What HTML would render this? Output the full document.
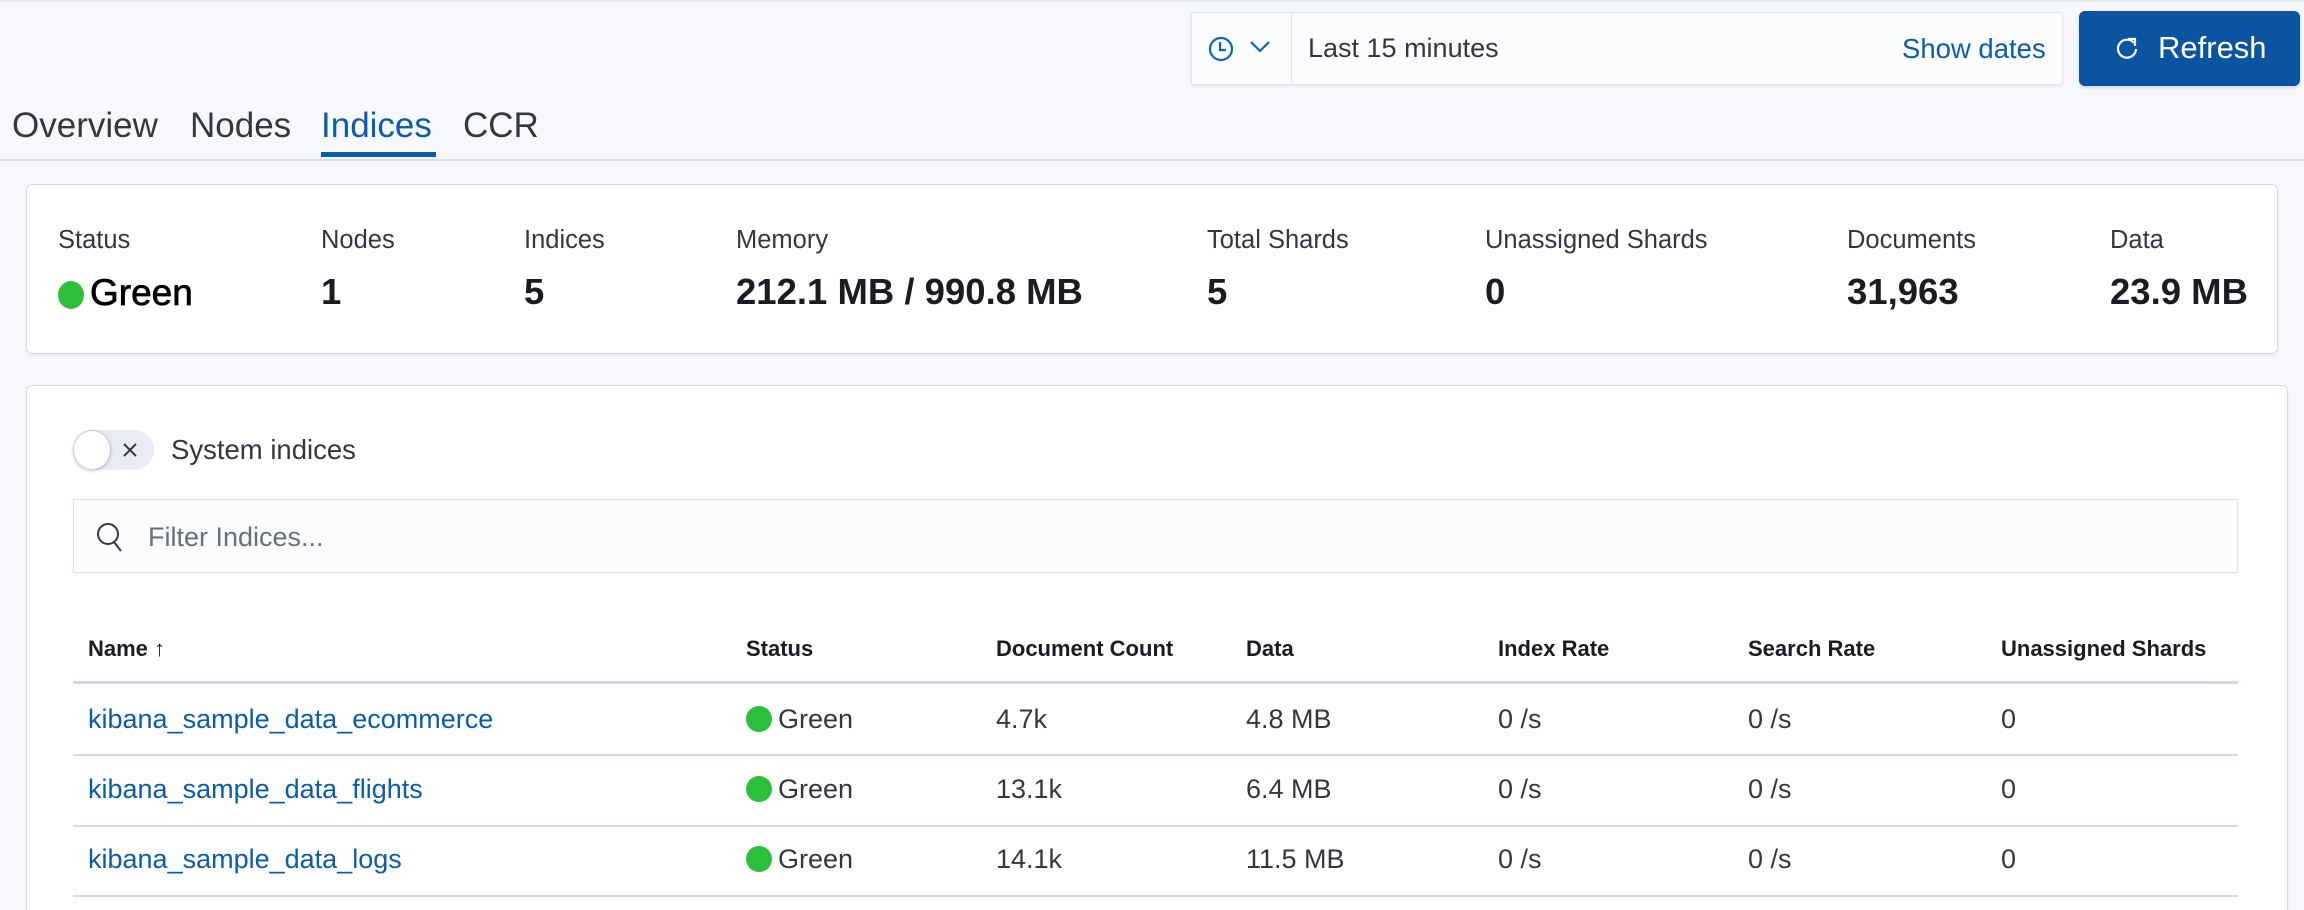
<!DOCTYPE html>
<html><head><meta charset="utf-8"><style>
*{margin:0;padding:0;box-sizing:border-box}
html{width:2304px;height:910px;overflow:hidden}
body{width:2304px;height:910px;background:#f7f8fc;font-family:"Liberation Sans",sans-serif;color:#343741;position:relative;overflow:hidden}
.a{position:absolute;white-space:nowrap}
.panel{position:absolute;background:#fff;border:1px solid #d3dae6;border-radius:6px;box-shadow:0 2px 3px rgba(0,0,0,.06)}
.lbl{font-size:25.5px;color:#343741;top:226px}
.val{font-size:36.5px;font-weight:bold;color:#1a1c21;top:271px}
.th{font-size:22px;font-weight:bold;color:#1a1c21;top:636px}
.td{font-size:27px;color:#343741}
.lnk{color:#0b5cad}
.dot{display:inline-block;width:26px;height:26px;border-radius:50%;background:#2cbf3a;vertical-align:-4px;margin-right:6px}
.hl{position:absolute;left:73px;width:2165px;height:2px;background:#d3dae6}
</style></head><body>
<div class="a" style="left:0;top:0;width:2304px;height:2px;background:#e4e8ef"></div>
<div class="a" style="left:1191px;top:12px;width:872px;height:73px;background:#fbfcfd;border:1px solid #dfe3ea;border-radius:3px;box-shadow:0 1px 2px rgba(0,0,0,.08)"></div>
<div class="a" style="left:1291px;top:12px;width:1px;height:73px;background:#e1e5ec"></div>
<svg class="a" style="left:1207px;top:35px" width="28" height="28" viewBox="0 0 28 28"><circle cx="14" cy="14" r="11" fill="none" stroke="#0b64c0" stroke-width="2.2"/><path d="M13 7v8h6" fill="none" stroke="#0b64c0" stroke-width="2.2"/></svg>
<svg class="a" style="left:1249px;top:40px" width="22" height="14" viewBox="0 0 22 14"><path d="M2 2l9 9 9-9" fill="none" stroke="#0b64c0" stroke-width="2.2"/></svg>
<div class="a" style="left:1308px;top:33px;font-size:27px;color:#343741">Last 15 minutes</div>
<div class="a" style="left:1902px;top:33px;font-size:27.5px;color:#0b5cad">Show dates</div>
<div class="a" style="left:2079px;top:11px;width:221px;height:75px;background:#0b54a2;border-radius:6px;box-shadow:0 2px 3px rgba(0,0,0,.15)"></div>
<svg class="a" style="left:2114px;top:35px" width="26" height="26" viewBox="0 0 26 26"><path d="M20 8A9 9 0 1 0 22 14" fill="none" stroke="#fff" stroke-width="2.2"/><path d="M14 4h7v7" fill="none" stroke="#fff" stroke-width="2.2"/></svg>
<div class="a" style="left:2158px;top:30px;font-size:31px;color:#fff">Refresh</div>
<div class="a" style="left:12px;top:106px;font-size:35px;color:#343741">Overview</div>
<div class="a" style="left:190px;top:106px;font-size:35px;color:#343741">Nodes</div>
<div class="a" style="left:321px;top:106px;font-size:35px;color:#0b5cad">Indices</div>
<div class="a" style="left:463px;top:106px;font-size:35px;color:#343741">CCR</div>
<div class="a" style="left:321px;top:152px;width:115px;height:5px;background:#0b5cad"></div>
<div class="a" style="left:0;top:159px;width:2304px;height:2px;background:#d8deea"></div>
<div class="panel" style="left:26px;top:184px;width:2252px;height:170px"></div>
<div class="a lbl" style="left:58px">Status</div>
<div class="a val" style="left:58px;top:272px;font-size:37px;font-weight:normal;color:#000;-webkit-text-stroke:0.7px #000"><span class="dot" style="width:26px;height:28px"></span>Green</div>
<div class="a lbl" style="left:321px">Nodes</div><div class="a val" style="left:321px">1</div>
<div class="a lbl" style="left:524px">Indices</div><div class="a val" style="left:524px">5</div>
<div class="a lbl" style="left:736px">Memory</div><div class="a val" style="left:736px">212.1 MB / 990.8 MB</div>
<div class="a lbl" style="left:1207px">Total Shards</div><div class="a val" style="left:1207px">5</div>
<div class="a lbl" style="left:1485px">Unassigned Shards</div><div class="a val" style="left:1485px">0</div>
<div class="a lbl" style="left:1847px">Documents</div><div class="a val" style="left:1847px">31,963</div>
<div class="a lbl" style="left:2110px">Data</div><div class="a val" style="left:2110px">23.9 MB</div>
<div class="panel" style="left:26px;top:385px;width:2262px;height:540px"></div>
<div class="a" style="left:73px;top:430px;width:81px;height:40px;border-radius:20px;background:#e9edf3"></div>
<div class="a" style="left:73px;top:430px;width:38px;height:40px;border-radius:50%;background:#fff;border:1px solid #c9d0db;box-shadow:0 1px 3px rgba(0,0,0,.2)"></div>
<svg class="a" style="left:121px;top:441px" width="18" height="18" viewBox="0 0 18 18"><path d="M3 3l12 12M15 3L3 15" stroke="#343741" stroke-width="2"/></svg>
<div class="a" style="left:171px;top:434px;font-size:27.5px;color:#343741">System indices</div>
<div class="a" style="left:73px;top:499px;width:2165px;height:74px;background:#fbfcfd;border:1px solid #dde2ea;box-shadow:0 1px 2px rgba(0,0,0,.06)"></div>
<svg class="a" style="left:93px;top:520px" width="34" height="34" viewBox="0 0 34 34"><circle cx="15" cy="14" r="10" fill="none" stroke="#343741" stroke-width="2"/><path d="M21 22l7 9" stroke="#343741" stroke-width="2"/></svg>
<div class="a" style="left:148px;top:522px;font-size:27px;color:#69707d">Filter Indices...</div>
<div class="a th" style="left:88px">Name <span style="font-weight:normal">↑</span></div>
<div class="a th" style="left:746px">Status</div>
<div class="a th" style="left:996px">Document Count</div>
<div class="a th" style="left:1246px">Data</div>
<div class="a th" style="left:1498px">Index Rate</div>
<div class="a th" style="left:1748px">Search Rate</div>
<div class="a th" style="left:2001px">Unassigned Shards</div>
<div class="hl" style="top:681px;height:3px;background:#d0d8e4"></div>
<div class="hl" style="top:754px"></div>
<div class="hl" style="top:825px"></div>
<div class="hl" style="top:895px"></div>

<div class="a td lnk" style="left:88px;top:704px">kibana_sample_data_ecommerce</div>
<div class="a td" style="left:746px;top:704px"><span class="dot"></span>Green</div>
<div class="a td" style="left:996px;top:704px">4.7k</div>
<div class="a td" style="left:1246px;top:704px">4.8 MB</div>
<div class="a td" style="left:1498px;top:704px">0 /s</div>
<div class="a td" style="left:1748px;top:704px">0 /s</div>
<div class="a td" style="left:2001px;top:704px">0</div>

<div class="a td lnk" style="left:88px;top:774px">kibana_sample_data_flights</div>
<div class="a td" style="left:746px;top:774px"><span class="dot"></span>Green</div>
<div class="a td" style="left:996px;top:774px">13.1k</div>
<div class="a td" style="left:1246px;top:774px">6.4 MB</div>
<div class="a td" style="left:1498px;top:774px">0 /s</div>
<div class="a td" style="left:1748px;top:774px">0 /s</div>
<div class="a td" style="left:2001px;top:774px">0</div>

<div class="a td lnk" style="left:88px;top:844px">kibana_sample_data_logs</div>
<div class="a td" style="left:746px;top:844px"><span class="dot"></span>Green</div>
<div class="a td" style="left:996px;top:844px">14.1k</div>
<div class="a td" style="left:1246px;top:844px">11.5 MB</div>
<div class="a td" style="left:1498px;top:844px">0 /s</div>
<div class="a td" style="left:1748px;top:844px">0 /s</div>
<div class="a td" style="left:2001px;top:844px">0</div>
</body></html>
